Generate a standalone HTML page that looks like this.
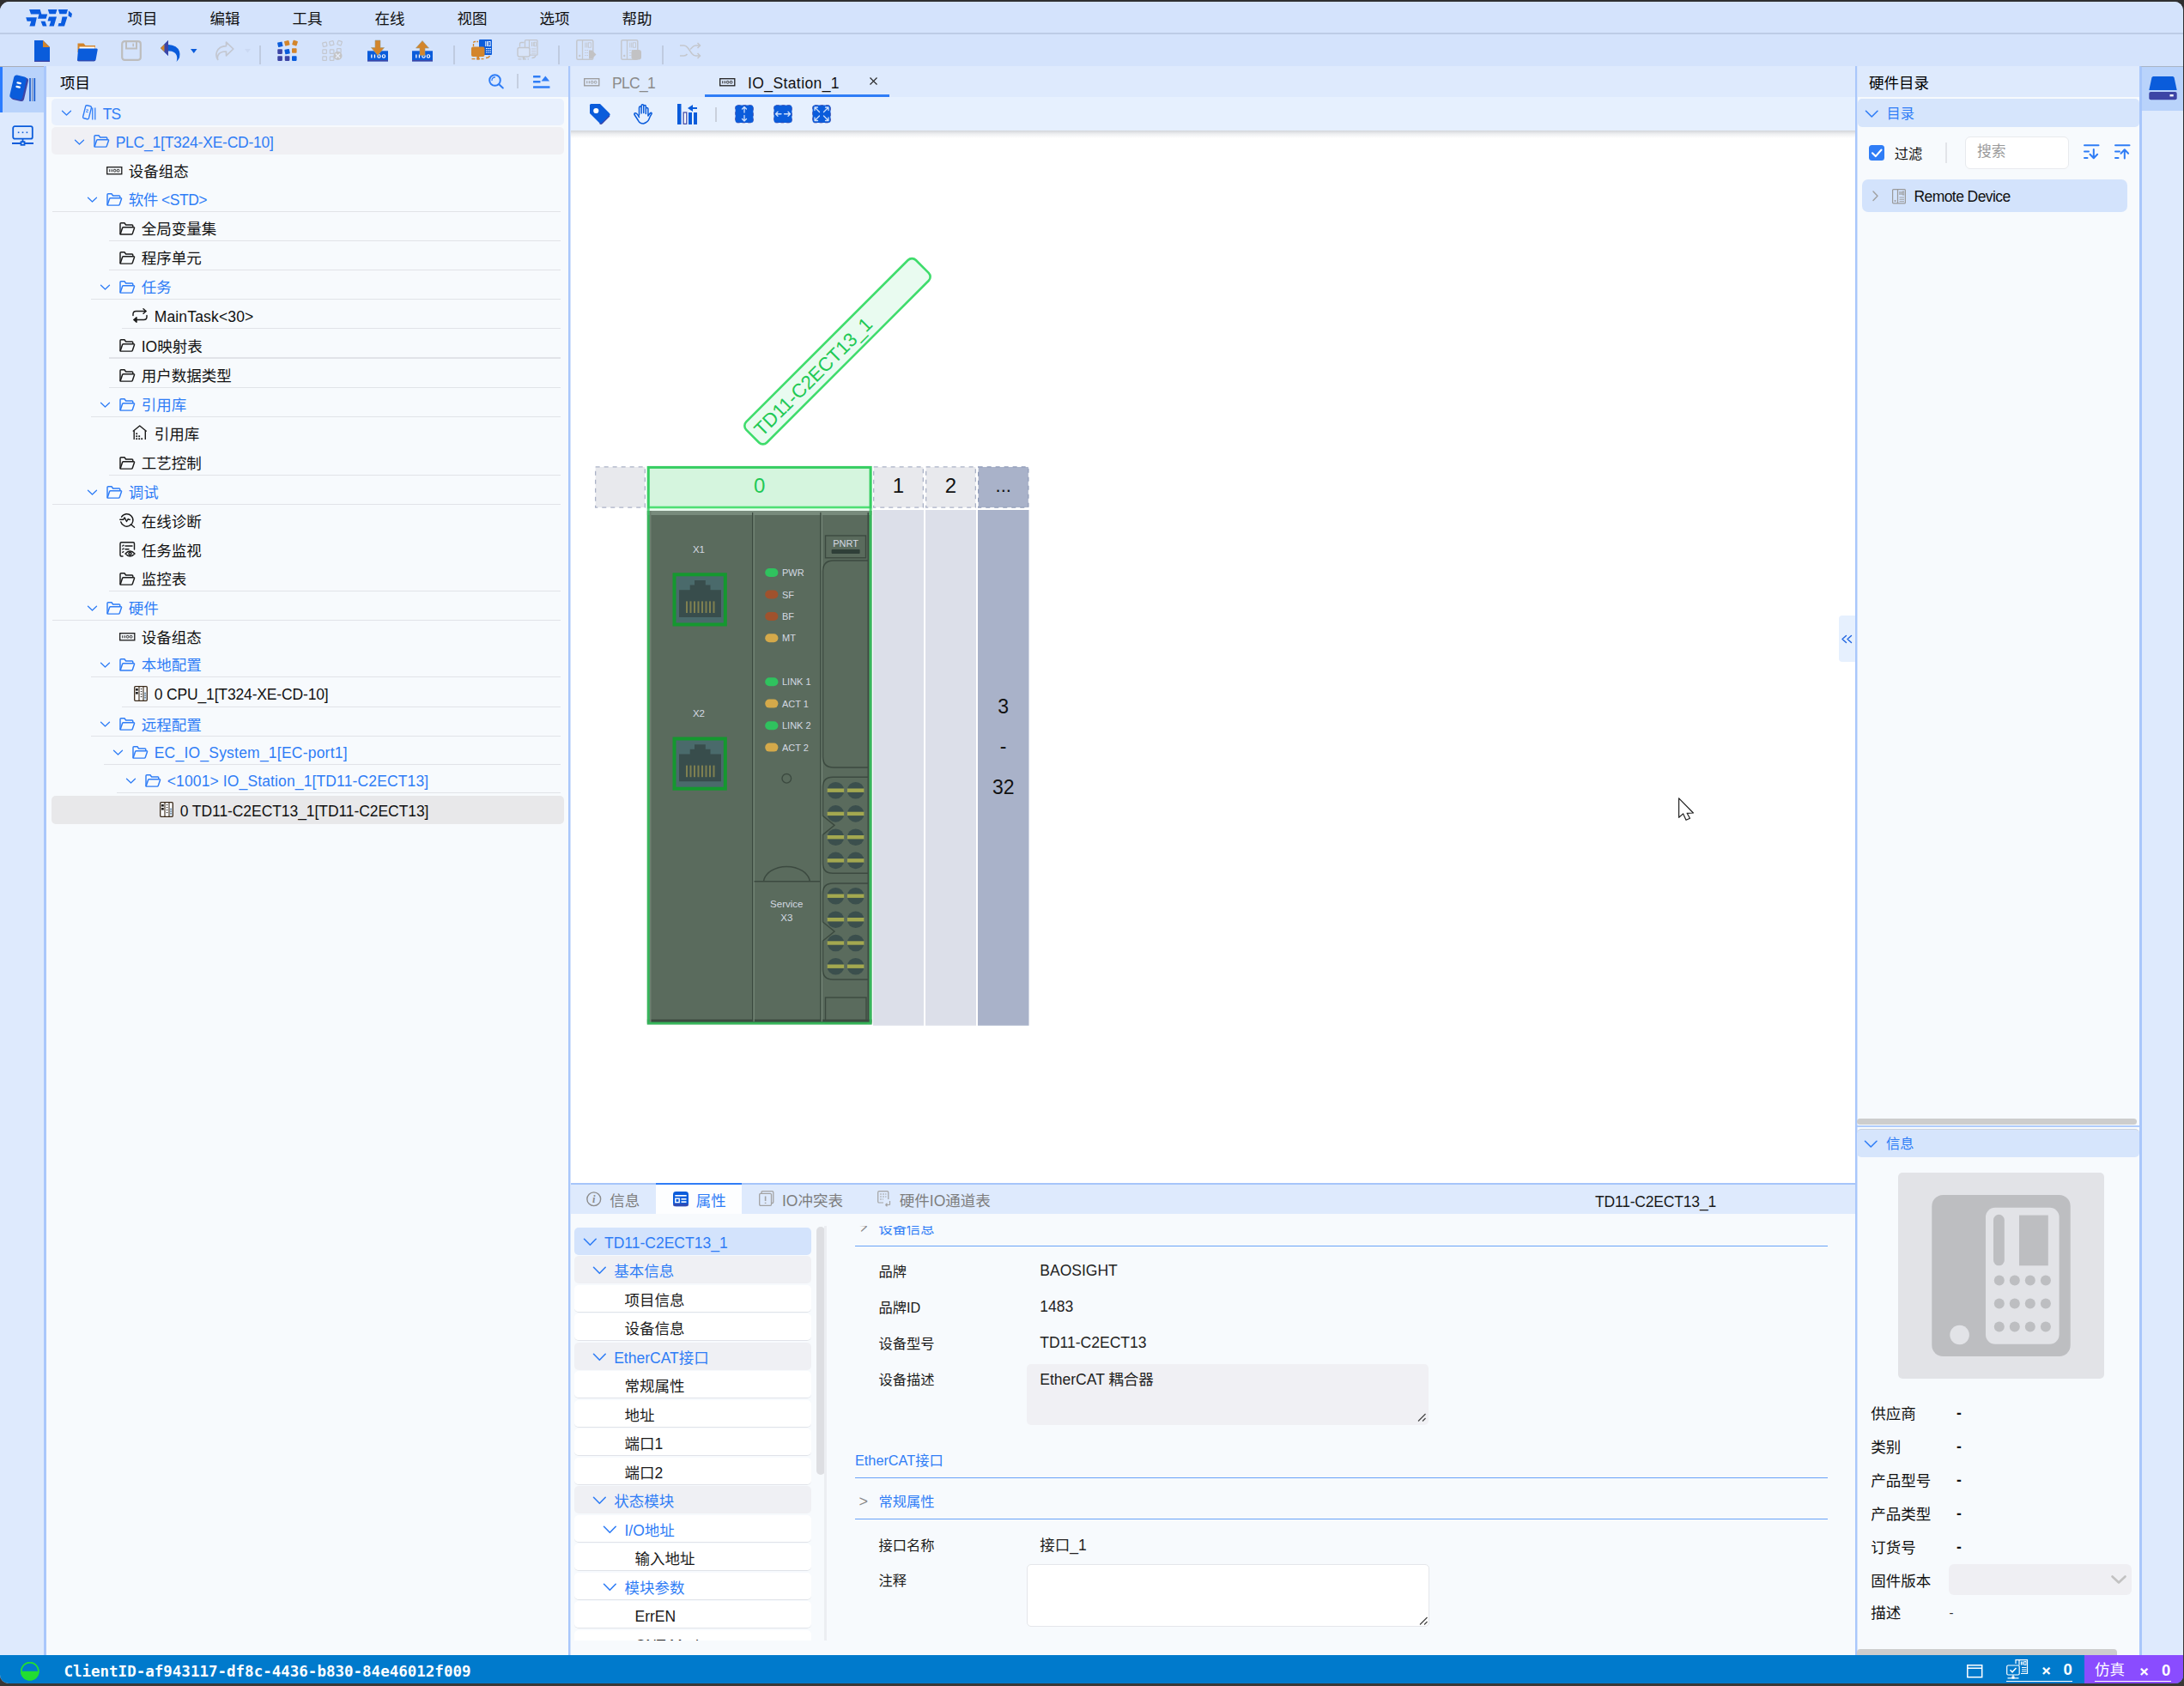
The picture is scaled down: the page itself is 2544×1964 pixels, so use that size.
<!DOCTYPE html>
<html lang="zh-CN"><head><meta charset="utf-8"><title>IO_Station_1</title>
<style>

*{box-sizing:border-box;margin:0;padding:0}
html,body{width:2544px;height:1964px;overflow:hidden;background:linear-gradient(#2f2f30,#2b2b2c 40%,#3a3836)}
body{font-family:"Liberation Sans","Noto Sans CJK SC",sans-serif;font-size:17.5px;color:#111;position:relative}
#win{position:absolute;left:0;top:2px;width:2543px;height:1959px;background:#d4e3fc;border-radius:11px 10px 9px 10px;overflow:hidden}
.abs{position:absolute}
svg{display:block;position:absolute;overflow:visible}
/* top */
#menubar{position:absolute;left:0;top:0;width:100%;height:37px;background:#d4e3fc}
#menubar .mi{position:absolute;top:2.2px;height:37px;line-height:37px;font-size:17.5px;color:#111;white-space:nowrap}
#menuline{position:absolute;left:0;top:36.2px;width:100%;height:1.6px;background:#bdcce6}
#toolbar{position:absolute;left:0;top:39px;width:100%;height:36px;background:#d4e3fc}
.tdiv{position:absolute;top:12px;width:2px;height:22px;background:#bfcbe0}
/* left strip */
#lstrip{position:absolute;left:0;top:75px;width:51px;height:1851px;background:#deeafd}
#lstrip .act{position:absolute;left:0;top:0;width:51px;height:54px;background:#b9d3fb;border-left:3px solid #2b7cff}
.vline{position:absolute;width:2.7px;background:#a9c7fb}
/* left panel */
#lpanel{position:absolute;left:54px;top:75px;width:608px;height:1851px;background:#f7fafd}
.phead{position:absolute;left:0;top:0;width:100%;height:36px;background:#deeafd;line-height:41px;font-size:17.5px;color:#000}
.row{position:absolute;height:31.25px;line-height:31px;white-space:nowrap;font-size:17.5px}
.row .bd{position:absolute;right:4px;bottom:0;height:1.25px;background:#e1e3e8}
.blue{color:#2f7df6}

.row .tx{position:absolute;top:1.5px;line-height:32.5px}

</style></head>
<body>
<div id="win">
<div id="menubar"><svg style="left:28px;top:7px" width="60" height="24" viewBox="28 9 60 24" >
<g fill="#0a5ce0">
<polygon points="34.100,11 46.700,11 48.400,16.500 55.200,16.500 53.600,21.700 44,21.700 45.500,16.600 36,16.600"/>
<polygon points="30.200,20.300 42.900,20.300 40.600,30.400 34.400,30.400 36.300,24.800 31.600,24.800"/>
<polygon points="47.600,24.800 52.500,24.800 54.500,30.400 49.800,30.400"/>
<polygon points="55.800,11 66.500,11 64.900,16.300 57.500,16.300"/>
<polygon points="57,19.500 66,19.500 62.800,30.400 57.300,30.400 59.300,24.500 55.500,24.500"/>
<polygon points="67.800,11 79,11 77.400,16.300 69.400,16.300"/>
<polygon points="80,12.500 84,16 83,20.500 79.500,18.500"/>
<polygon points="72.500,19.500 78.500,19.500 75,30.400 67.500,30.400 68.500,27 71,27"/>
</g></svg>
<div class="mi" style="left:148.5px">项目</div><div class="mi" style="left:244.5px">编辑</div><div class="mi" style="left:340.5px">工具</div><div class="mi" style="left:436.5px">在线</div><div class="mi" style="left:532.5px">视图</div><div class="mi" style="left:628.5px">选项</div><div class="mi" style="left:724.5px">帮助</div></div>
<div id="menuline"></div>
<div id="toolbar"><svg style="left:38.5px;top:6px" width="19" height="25" viewBox="0 0 19 25" >
<path d="M1 0h10l8 8v17H1z" fill="#0a5cdb"/><path d="M11 0l8 8h-8z" fill="#d3852b"/><rect x="1" y="23.6" width="18" height="1.4" fill="#3d45a5"/></svg>
<svg style="left:88.5px;top:7.5px" width="25" height="23" viewBox="0 0 25 23" >
<path d="M1.5 1.5h7l2 2.5h11.5v8h-20.5z" fill="#d3852b"/><rect x="3.5" y="5.5" width="18" height="5" fill="#fff"/>
<path d="M3.2 7.6h20.3q1.5 0 1.2 1.5l-2.1 11.5q-.4 1.6-2 1.6h-18.1q-1.8 0-1.5-1.7l1-11.4q.2-1.5 1.2-1.5z" fill="#0a5cdb"/>
<path d="M1 21.2q.3 1 1.5 1h18.1q1.2 0 1.8-1z" fill="#3d45a5"/></svg>
<svg style="left:141px;top:6px" width="24" height="24" viewBox="0 0 24 24" >
<rect x="1.2" y="1.2" width="21.6" height="21.6" rx="3" fill="none" stroke="#bdbdbd" stroke-width="2.2"/>
<path d="M6 1.5v8h12v-8" fill="none" stroke="#bdbdbd" stroke-width="2"/><rect x="13.4" y="3.6" width="1.6" height="3.6" fill="#bdbdbd"/></svg>
<svg style="left:187px;top:5.5px" width="23" height="26" viewBox="0 0 23 26" >
<path d="M9 0L0 9l9 9v-5.5q7-.5 9.5 4.5q1.5 3 0 8q5.500-5 3.500-12q-2.500-7.500-13-8z" fill="#0a5cdb"/>
<path d="M9 0v18L4.5 13.500v-9z" fill="#3d45a5"/>
<path d="M4.500 4.500L0 9l4.500 4.500z" fill="#d3852b"/></svg>
<svg style="left:221.5px;top:15.5px" width="7.5" height="5" viewBox="0 0 7.500 5" ><path d="M0 0h7.500L3.750 5z" fill="#0a5cdb"/></svg>
<svg style="left:251px;top:6.5px" width="22" height="23" viewBox="0 0 22 23" >
<path d="M12.500 1.200l8.300 7.800-8.300 7.800v-4.800q-6.500-.2-9 3.500q-1.800 2.800-.8 6q-3-4.500-1-9.500q2.600-6 10.800-6.300z" fill="none" stroke="#c3c7d1" stroke-width="1.700" stroke-linejoin="round"/></svg>
<svg style="left:285px;top:15.5px" width="7" height="4.5" viewBox="0 0 7 4.500" ><path d="M0 0h7L3.500 4.500z" fill="#cbd9f3"/></svg>
<div class="tdiv" style="left:301.500px"></div><svg style="left:323px;top:5.5px" width="24" height="24.5" viewBox="0 0 24 24.500" ><rect x="0.5" y="2" width="5.6" height="5.6" rx=".8" fill="#0a5cdb" transform="rotate(-12 3.3 4.8)"/><rect x="8.5" y="0.5" width="5.6" height="5.6" rx=".8" fill="#d3852b" transform="rotate(-14 11.3 3.3)"/><rect x="17.8" y="0.3" width="5.6" height="5.6" rx=".8" fill="#d3852b" transform="rotate(18 20.6 3.1)"/><rect x="0.3" y="10.3" width="5.6" height="5.6" rx=".8" fill="#3d45a5" transform="rotate(0 3.1 13.1)"/><rect x="8.8" y="10.3" width="5.6" height="5.6" rx=".8" fill="#0a5cdb" transform="rotate(-12 11.6 13.1)"/><rect x="17" y="9.2" width="5.6" height="5.6" rx=".8" fill="#d3852b" transform="rotate(0 19.8 12)"/><rect x="0.3" y="18.3" width="5.6" height="5.6" rx=".8" fill="#3d45a5" transform="rotate(0 3.1 21.1)"/><rect x="8.8" y="18.3" width="5.6" height="5.6" rx=".8" fill="#3d45a5" transform="rotate(0 11.6 21.1)"/><rect x="17" y="18.3" width="5.6" height="5.6" rx=".8" fill="#0a5cdb" transform="rotate(0 19.8 21.1)"/></svg>
<svg style="left:375px;top:5.5px" width="24" height="24.5" viewBox="0 0 24 24.500" ><rect x="1" y="2.5" width="4.6" height="4.6" rx=".6" fill="none" stroke="#c4c8d0" stroke-width="1.200" transform="rotate(-12 3.3 4.8)"/><rect x="9" y="1" width="4.6" height="4.6" rx=".6" fill="none" stroke="#c4c8d0" stroke-width="1.200" transform="rotate(-14 11.3 3.3)"/><rect x="18.3" y="0.8" width="4.6" height="4.6" rx=".6" fill="none" stroke="#c4c8d0" stroke-width="1.200" transform="rotate(18 20.6 3.1)"/><rect x="0.8" y="10.8" width="4.6" height="4.6" rx=".6" fill="none" stroke="#c4c8d0" stroke-width="1.200" transform="rotate(0 3.1 13.1)"/><rect x="9.3" y="10.8" width="4.6" height="4.6" rx=".6" fill="none" stroke="#c4c8d0" stroke-width="1.200" transform="rotate(0 11.6 13.1)"/><rect x="17.5" y="9.7" width="4.6" height="4.6" rx=".6" fill="none" stroke="#c4c8d0" stroke-width="1.200" transform="rotate(0 19.8 12)"/><rect x="0.8" y="18.8" width="4.6" height="4.6" rx=".6" fill="none" stroke="#c4c8d0" stroke-width="1.200" transform="rotate(0 3.1 21.1)"/><rect x="9.3" y="18.8" width="4.6" height="4.6" rx=".6" fill="none" stroke="#c4c8d0" stroke-width="1.200" transform="rotate(0 11.6 21.1)"/><circle cx="18.500" cy="18" r="5" fill="#c4c4c6"/><path d="M16 15.500l5 5m0-5l-5 5" stroke="#e4ebf8" stroke-width="1.600"/></svg>
<svg style="left:428px;top:6px" width="24" height="24.5" viewBox="0 0 24 24.500" ><rect x="0" y="12.300" width="24" height="12" fill="#0a5cdb"/><rect x="0" y="23" width="24" height="1.500" fill="#3d45a5"/><rect x="4.200" y="16.500" width="1.300" height="4" fill="#fff"/><rect x="7.800" y="16.500" width="1.300" height="4" fill="#fff"/><circle cx="13.500" cy="18.500" r="1.700" fill="none" stroke="#fff" stroke-width="1.100"/><circle cx="19" cy="18.500" r="1.700" fill="none" stroke="#fff" stroke-width="1.100"/><path d="M9 0h6v8.500h4.500L12 17.500 4.500 8.500H9z" fill="#d3852b" stroke="#9a9a80" stroke-width=".6"/></svg>
<svg style="left:480px;top:6px" width="24" height="24.5" viewBox="0 0 24 24.500" ><rect x="0" y="12.300" width="24" height="12" fill="#0a5cdb"/><rect x="0" y="23" width="24" height="1.500" fill="#3d45a5"/><rect x="4.200" y="16.500" width="1.300" height="4" fill="#fff"/><rect x="7.800" y="16.500" width="1.300" height="4" fill="#fff"/><circle cx="13.500" cy="18.500" r="1.700" fill="none" stroke="#fff" stroke-width="1.100"/><circle cx="19" cy="18.500" r="1.700" fill="none" stroke="#fff" stroke-width="1.100"/><path d="M9 17.500h6V9h4.500L12 .5 4.500 9H9z" fill="#d3852b" stroke="#9a9a80" stroke-width=".6"/></svg>
<div class="tdiv" style="left:527.500px"></div><svg style="left:548px;top:5px" width="26" height="25" viewBox="0 0 26 25" >
<rect x="10" y="0" width="15" height="18" rx="1" fill="#0a5cdb"/>
<g fill="#fff"><rect x="17.300" y="2" width=".9" height="6"/><rect x="19" y="2" width=".9" height="6"/><rect x="21" y="2.400" width="2.200" height="5.200" fill="none" stroke="#fff" stroke-width=".8"/>
<rect x="18" y="10" width="1.500" height="1"/><rect x="20.200" y="10" width="1.500" height="1"/><rect x="22.400" y="10" width="1.500" height="1"/>
<rect x="18" y="12.300" width="1.500" height="1"/><rect x="20.200" y="12.300" width="1.500" height="1"/><rect x="22.400" y="12.300" width="1.500" height="1"/>
<rect x="18" y="14.600" width="1.500" height="1"/><rect x="20.200" y="14.600" width="1.500" height="1"/><rect x="22.400" y="14.600" width="1.500" height="1"/></g>
<path d="M3.500 8V4q0-1.500 1.500-1.500h4" fill="none" stroke="#d3852b" stroke-width="1.300" stroke-dasharray="3 1.200"/>
<rect x="1" y="8.500" width="15.500" height="11.500" rx="2" fill="#d3852b"/>
<rect x="7.300" y="20" width="3" height="3.600" fill="#d3852b"/><path d="M1.500 22.600h14" stroke="#d3852b" stroke-width="1.200" stroke-dasharray="4 1.500"/>
<path d="M18 21.500q3.500 0 4.500-2.500" fill="none" stroke="#d3852b" stroke-width="1.300"/></svg>
<svg style="left:602px;top:5px" width="25" height="25" viewBox="0 0 25 25" >
<rect x="9.500" y=".7" width="14.500" height="17.500" rx="1" fill="none" stroke="#c4c7cd" stroke-width="1.300"/>
<path d="M14.500 1v17" stroke="#c4c7cd" stroke-width="1.200"/>
<g fill="#c4c7cd"><rect x="17" y="3" width="1" height="5"/><rect x="18.800" y="3" width="1" height="5"/><rect x="20.500" y="3.200" width="2" height="4.600" fill="none" stroke="#c4c7cd" stroke-width=".8"/>
<rect x="17" y="10.500" width="5.500" height=".9"/><rect x="17" y="13" width="5.500" height=".9"/><rect x="17" y="15.500" width="5.500" height=".9"/></g>
<path d="M3.500 8.500V5q0-1.500 1.500-1.500h3.500" fill="none" stroke="#c4c7cd" stroke-width="1.300"/>
<rect x="1" y="9.500" width="14" height="10.500" rx="2" fill="#d8e4f8" stroke="#c4c7cd" stroke-width="1.400"/>
<rect x="6.800" y="20" width="2.600" height="3.400" fill="#c4c7cd"/><path d="M1.500 22.800h12.500" stroke="#c4c7cd" stroke-width="1.200" stroke-dasharray="4 1.500"/>
<path d="M17.500 21.500q3.500 0 4.500-2.500" fill="none" stroke="#c4c7cd" stroke-width="1.300"/></svg>
<div class="tdiv" style="left:649.500px"></div><svg style="left:671px;top:5px" width="25" height="24.5" viewBox="0 0 25 24.500" ><rect x=".8" y=".8" width="19" height="22.500" rx="1.500" fill="none" stroke="#c4c7cd" stroke-width="1.500"/>
<path d="M7.500 1v22" stroke="#c4c7cd" stroke-width="1.300"/><circle cx="4.200" cy="19" r="1.200" fill="#c4c7cd"/>
<g fill="#c4c7cd"><rect x="10.300" y="3.500" width="1" height="6"/><rect x="12.300" y="3.500" width="1" height="6"/><rect x="14.300" y="3.800" width="3.200" height="5.400" fill="none" stroke="#c4c7cd" stroke-width=".9"/>
<rect x="10.300" y="12" width="1.300" height="1"/><rect x="12.600" y="12" width="1.300" height="1"/><rect x="10.300" y="15" width="1.300" height="1"/><rect x="12.600" y="15" width="1.300" height="1"/><rect x="10.300" y="18" width="1.300" height="1"/><rect x="12.600" y="18" width="1.300" height="1"/></g><path d="M15 12.500h3.500l5 5-5 5H15z" fill="#c2c2c4"/></svg>
<svg style="left:723px;top:5px" width="25" height="24.5" viewBox="0 0 25 24.500" ><rect x=".8" y=".8" width="19" height="22.500" rx="1.500" fill="none" stroke="#c4c7cd" stroke-width="1.500"/>
<path d="M7.500 1v22" stroke="#c4c7cd" stroke-width="1.300"/><circle cx="4.200" cy="19" r="1.200" fill="#c4c7cd"/>
<g fill="#c4c7cd"><rect x="10.300" y="3.500" width="1" height="6"/><rect x="12.300" y="3.500" width="1" height="6"/><rect x="14.300" y="3.800" width="3.200" height="5.400" fill="none" stroke="#c4c7cd" stroke-width=".9"/>
<rect x="10.300" y="12" width="1.300" height="1"/><rect x="12.600" y="12" width="1.300" height="1"/><rect x="10.300" y="15" width="1.300" height="1"/><rect x="12.600" y="15" width="1.300" height="1"/><rect x="10.300" y="18" width="1.300" height="1"/><rect x="12.600" y="18" width="1.300" height="1"/></g><rect x="12.500" y="12" width="11.500" height="11.500" rx="3" fill="#c2c2c4"/></svg>
<div class="tdiv" style="left:770.800px"></div><svg style="left:792px;top:7.5px" width="25" height="20" viewBox="0 0 25 20" ><g fill="none" stroke="#c4c7cd" stroke-width="1.500"><path d="M0 4h4.500q2.500 0 4.500 2.500l5 7q2 2.500 4.500 2.500h5"/><path d="M0 16h4.500q2.500 0 4 -2M12 8.500l2-2q2-2.500 4.500-2.500h5"/><path d="M20.500 1l3 3-3 3M20.500 13l3 3-3 3"/></g></svg>
</div>
<div id="lstrip"><div class="act"></div><div class="abs" style="left:0;top:0;width:51px;height:1.200px;background:#a9aeb8"></div><svg style="left:10px;top:9px" width="33" height="34" viewBox="0 0 33 34" ><rect x="5.300" y="3" width="15.500" height="28" rx="3.200" fill="#3d45a5" transform="rotate(13 11.750 16.500)"/><rect x="3.500" y="2.300" width="15" height="27.500" rx="3.200" fill="#0a5cdb" transform="rotate(13 11.750 16.500)"/><g stroke="#fff" stroke-width="2.300" stroke-linecap="round"><path d="M10.500 10.300l3.300.8M9.500 14.800l3.300.8"/></g><path d="M25 5v27M30.300 5v27" stroke="#1a5fd0" stroke-width="1.700"/><path d="M27.700 5v27" stroke="#7f96c4" stroke-width="1.500"/></svg>
<svg style="left:13.5px;top:69px" width="25" height="25" viewBox="0 0 25 25" ><g fill="none" stroke="#0a5cdb" stroke-width="1.800"><rect x="1.200" y="1.200" width="22.600" height="14.500" rx="2"/><path d="M12.500 15.700v5M0 21h25"/><rect x="10.500" y="19.200" width="4" height="3.600" fill="#deeafd"/></g><g fill="#0a5cdb"><rect x="6.800" y="7.500" width="1.600" height="1.600"/><rect x="11.700" y="7.500" width="1.600" height="1.600"/><rect x="16.600" y="7.500" width="1.600" height="1.600"/></g></svg>
</div><div class="vline" style="left:51px;top:75px;height:1851px"></div>
<div id="lpanel"><div class="phead"><span style="position:absolute;left:16px">项目</span><svg style="left:515px;top:8.5px" width="18" height="18" viewBox="0 0 18 18" ><g fill="none" stroke="#2f7df6" stroke-width="2" stroke-linecap="round"><circle cx="7.500" cy="7.500" r="6.300"/><path d="M12.300 12.300l4.500 4.200"/><path d="M4 7.500a3.500 3.500 0 0 1 3.500-3.500" stroke-width="1.300"/></g></svg>
<div style="position:absolute;left:548px;top:9px;width:2px;height:17px;background:#c5cfe0"></div><svg style="left:566.5px;top:11px" width="19.5" height="15" viewBox="0 0 19.500 15" ><g fill="#2f7df6"><rect x="0" y="0" width="8.500" height="2.600" rx=".5"/><rect x="0" y="6" width="8.500" height="2.600" rx=".5"/><rect x="0" y="12.200" width="19.500" height="2.600" rx=".5"/><path d="M9.500 6.500l4.800-6 4.800 6z"/></g></svg>
</div><div class="row" style="left:6px;top:38px;width:597px;background:#e8f0fd;border-radius:5px;"><svg style="left:12px;top:14.3px" width="11" height="5.5" viewBox="0 0 11 5.5" ><path d="M.5 .3L5.5 5L10.5 .3" fill="none" stroke="#2f7df6" stroke-width="1.3" stroke-linecap="round" stroke-linejoin="round"/></svg>
<svg style="left:34.5px;top:7px" width="17" height="18" viewBox="0 0 17 18" ><g fill="none" stroke="#2f7df6" stroke-width="1.400"><rect x="3" y="1" width="7" height="15.500" rx="1.500" transform="rotate(14 6.500 9)"/><path d="M5.500 5.800l2.500.6M5 8l2.500.6" stroke-width="1.100"/><path d="M12.800 3.500v14M15.800 3.500v14" stroke-width="1.300"/></g></svg>
<span class="tx blue" id="lt0" style="left:59.7px;letter-spacing:-0.8px">TS</span></div>
<div class="row" style="left:6px;top:71.3px;width:597px;background:#f0f0f4;border-radius:5px;"><svg style="left:27px;top:14.3px" width="11" height="5.5" viewBox="0 0 11 5.5" ><path d="M.5 .3L5.5 5L10.5 .3" fill="none" stroke="#2f7df6" stroke-width="1.3" stroke-linecap="round" stroke-linejoin="round"/></svg>
<svg style="left:49px;top:8.9px" width="18.5" height="15" viewBox="0 0 18.5 15" ><g fill="none" stroke="#2f7df6" stroke-width="1.45" stroke-linejoin="round"><path d="M1 13.500V1.800q0-1 1-1h4l1.600 2.200h7.200q1 0 1 1v1.500"/><path d="M1.100 13.900l2.500-7.300q.3-.9 1.200-.9h11.900q1.100 0 .8 1l-2.200 6.500q-.3.900-1.200.9H2q-1 0-1-.9z"/></g></svg>
<span class="tx blue" id="lt1" style="left:74.7px;letter-spacing:-0.235px">PLC_1[T324-XE-CD-10]</span></div>
<div class="row" style="left:6px;top:105.4px;width:597px;"><svg style="left:64px;top:11.5px" width="18.5" height="9.5" viewBox="0 0 18.500 9.500" ><rect x=".7" y=".7" width="17.100" height="8.100" fill="none" stroke="#1b1b1b" stroke-width="1.300"/><g fill="#1b1b1b"><rect x="3.300" y="3.200" width="1" height="3.100"/><rect x="5.800" y="3.200" width="1" height="3.100"/></g><g fill="none" stroke="#1b1b1b" stroke-width=".9"><rect x="8.300" y="3.400" width="2.600" height="2.700" rx=".8"/><rect x="12.300" y="3.400" width="2.600" height="2.700" rx=".8"/></g></svg>
<span class="tx" id="lt2" style="left:89.7px">设备组态</span></div>
<div class="row" style="left:6px;top:138.7px;width:597px;"><div class="bd" style="left:1px"></div><svg style="left:42px;top:14.3px" width="11" height="5.5" viewBox="0 0 11 5.5" ><path d="M.5 .3L5.5 5L10.5 .3" fill="none" stroke="#2f7df6" stroke-width="1.3" stroke-linecap="round" stroke-linejoin="round"/></svg>
<svg style="left:64px;top:8.9px" width="18.5" height="15" viewBox="0 0 18.5 15" ><g fill="none" stroke="#2f7df6" stroke-width="1.45" stroke-linejoin="round"><path d="M1 13.500V1.800q0-1 1-1h4l1.600 2.200h7.200q1 0 1 1v1.500"/><path d="M1.100 13.900l2.500-7.300q.3-.9 1.200-.9h11.900q1.100 0 .8 1l-2.200 6.500q-.3.900-1.200.9H2q-1 0-1-.9z"/></g></svg>
<span class="tx blue" id="lt3" style="left:89.7px;letter-spacing:-0.5px">软件 &lt;STD&gt;</span></div>
<div class="row" style="left:6px;top:172.7px;width:597px;"><div class="bd" style="left:67px"></div><svg style="left:79px;top:8.9px" width="18.5" height="15" viewBox="0 0 18.5 15" ><g fill="none" stroke="#1b1b1b" stroke-width="1.45" stroke-linejoin="round"><path d="M1 13.500V1.800q0-1 1-1h4l1.600 2.200h7.200q1 0 1 1v1.500"/><path d="M1.100 13.900l2.500-7.300q.3-.9 1.200-.9h11.900q1.100 0 .8 1l-2.200 6.500q-.3.900-1.200.9H2q-1 0-1-.9z"/></g></svg>
<span class="tx" id="lt4" style="left:104.7px">全局变量集</span></div>
<div class="row" style="left:6px;top:206.8px;width:597px;"><div class="bd" style="left:67px"></div><svg style="left:79px;top:8.9px" width="18.5" height="15" viewBox="0 0 18.5 15" ><g fill="none" stroke="#1b1b1b" stroke-width="1.45" stroke-linejoin="round"><path d="M1 13.500V1.800q0-1 1-1h4l1.600 2.200h7.200q1 0 1 1v1.500"/><path d="M1.100 13.900l2.500-7.300q.3-.9 1.200-.9h11.900q1.100 0 .8 1l-2.200 6.500q-.3.900-1.200.9H2q-1 0-1-.9z"/></g></svg>
<span class="tx" id="lt5" style="left:104.7px">程序单元</span></div>
<div class="row" style="left:6px;top:240.9px;width:597px;"><div class="bd" style="left:46px"></div><svg style="left:57px;top:14.3px" width="11" height="5.5" viewBox="0 0 11 5.5" ><path d="M.5 .3L5.5 5L10.5 .3" fill="none" stroke="#2f7df6" stroke-width="1.3" stroke-linecap="round" stroke-linejoin="round"/></svg>
<svg style="left:79px;top:8.9px" width="18.5" height="15" viewBox="0 0 18.5 15" ><g fill="none" stroke="#2f7df6" stroke-width="1.45" stroke-linejoin="round"><path d="M1 13.500V1.800q0-1 1-1h4l1.600 2.200h7.200q1 0 1 1v1.500"/><path d="M1.100 13.900l2.500-7.300q.3-.9 1.200-.9h11.900q1.100 0 .8 1l-2.200 6.500q-.3.900-1.200.9H2q-1 0-1-.9z"/></g></svg>
<span class="tx blue" id="lt6" style="left:104.7px">任务</span></div>
<div class="row" style="left:6px;top:274.9px;width:597px;"><div class="bd" style="left:82px"></div><svg style="left:94px;top:7.5px" width="18" height="17" viewBox="0 0 18 17" ><g fill="none" stroke="#1b1b1b" stroke-width="1.450" stroke-linecap="round" stroke-linejoin="round"><path d="M1 8.500V7q0-3.500 3.500-3.500H16"/><path d="M13 .8l3 2.700-3 2.700"/><path d="M17 8.500V10q0 3.500-3.500 3.500H2"/><path d="M5 10.800l-3 2.700 3 2.700z" fill="#1b1b1b"/></g></svg>
<span class="tx" id="lt7" style="left:119.7px;letter-spacing:0.16px">MainTask&lt;30&gt;</span></div>
<div class="row" style="left:6px;top:309.3px;width:597px;"><div class="bd" style="left:67px"></div><svg style="left:79px;top:8.9px" width="18.5" height="15" viewBox="0 0 18.5 15" ><g fill="none" stroke="#1b1b1b" stroke-width="1.45" stroke-linejoin="round"><path d="M1 13.500V1.800q0-1 1-1h4l1.600 2.200h7.200q1 0 1 1v1.500"/><path d="M1.100 13.900l2.500-7.300q.3-.9 1.200-.9h11.900q1.100 0 .8 1l-2.200 6.500q-.3.900-1.200.9H2q-1 0-1-.9z"/></g></svg>
<span class="tx" id="lt8" style="left:104.7px">IO映射表</span></div>
<div class="row" style="left:6px;top:343.7px;width:597px;"><div class="bd" style="left:67px"></div><svg style="left:79px;top:8.9px" width="18.5" height="15" viewBox="0 0 18.5 15" ><g fill="none" stroke="#1b1b1b" stroke-width="1.45" stroke-linejoin="round"><path d="M1 13.500V1.800q0-1 1-1h4l1.600 2.200h7.200q1 0 1 1v1.500"/><path d="M1.100 13.900l2.500-7.300q.3-.9 1.200-.9h11.900q1.100 0 .8 1l-2.200 6.500q-.3.900-1.200.9H2q-1 0-1-.9z"/></g></svg>
<span class="tx" id="lt9" style="left:104.7px">用户数据类型</span></div>
<div class="row" style="left:6px;top:377.8px;width:597px;"><div class="bd" style="left:46px"></div><svg style="left:57px;top:14.3px" width="11" height="5.5" viewBox="0 0 11 5.5" ><path d="M.5 .3L5.5 5L10.5 .3" fill="none" stroke="#2f7df6" stroke-width="1.3" stroke-linecap="round" stroke-linejoin="round"/></svg>
<svg style="left:79px;top:8.9px" width="18.5" height="15" viewBox="0 0 18.5 15" ><g fill="none" stroke="#2f7df6" stroke-width="1.45" stroke-linejoin="round"><path d="M1 13.500V1.800q0-1 1-1h4l1.600 2.200h7.200q1 0 1 1v1.500"/><path d="M1.100 13.900l2.500-7.300q.3-.9 1.200-.9h11.900q1.100 0 .8 1l-2.200 6.500q-.3.900-1.200.9H2q-1 0-1-.9z"/></g></svg>
<span class="tx blue" id="lt10" style="left:104.7px">引用库</span></div>
<div class="row" style="left:6px;top:411.7px;width:597px;"><svg style="left:94px;top:6.5px" width="17.5" height="17.5" viewBox="0 0 17.500 17.500" ><g fill="none" stroke="#1b1b1b" stroke-width="1.400" stroke-linejoin="round"><path d="M.8 7.500L8.750 1l7.950 6.500"/><path d="M2.200 6.500V17M15.300 6.500V17"/></g><g fill="#1b1b1b"><rect x="4.300" y="9.300" width="1.800" height="1.800"/><rect x="4.300" y="12.300" width="1.800" height="1.800"/><rect x="7.300" y="12.300" width="1.800" height="1.800"/><rect x="4.300" y="15.300" width="1.800" height="1.800"/><rect x="7.300" y="15.300" width="1.800" height="1.800"/><rect x="10.300" y="15.300" width="1.800" height="1.800"/></g></svg>
<span class="tx" id="lt11" style="left:119.7px">引用库</span></div>
<div class="row" style="left:6px;top:445.7px;width:597px;"><div class="bd" style="left:67px"></div><svg style="left:79px;top:8.9px" width="18.5" height="15" viewBox="0 0 18.5 15" ><g fill="none" stroke="#1b1b1b" stroke-width="1.45" stroke-linejoin="round"><path d="M1 13.500V1.800q0-1 1-1h4l1.600 2.200h7.200q1 0 1 1v1.500"/><path d="M1.100 13.900l2.500-7.300q.3-.9 1.200-.9h11.900q1.100 0 .8 1l-2.200 6.500q-.3.900-1.200.9H2q-1 0-1-.9z"/></g></svg>
<span class="tx" id="lt12" style="left:104.7px">工艺控制</span></div>
<div class="row" style="left:6px;top:479.7px;width:597px;"><div class="bd" style="left:1px"></div><svg style="left:42px;top:14.3px" width="11" height="5.5" viewBox="0 0 11 5.5" ><path d="M.5 .3L5.5 5L10.5 .3" fill="none" stroke="#2f7df6" stroke-width="1.3" stroke-linecap="round" stroke-linejoin="round"/></svg>
<svg style="left:64px;top:8.9px" width="18.5" height="15" viewBox="0 0 18.5 15" ><g fill="none" stroke="#2f7df6" stroke-width="1.45" stroke-linejoin="round"><path d="M1 13.500V1.800q0-1 1-1h4l1.600 2.200h7.200q1 0 1 1v1.500"/><path d="M1.100 13.900l2.500-7.300q.3-.9 1.200-.9h11.900q1.100 0 .8 1l-2.200 6.500q-.3.900-1.200.9H2q-1 0-1-.9z"/></g></svg>
<span class="tx blue" id="lt13" style="left:89.7px">调试</span></div>
<div class="row" style="left:6px;top:513.3px;width:597px;"><svg style="left:79px;top:7px" width="18.5" height="18" viewBox="0 0 18.500 18" ><g fill="none" stroke="#1b1b1b" stroke-width="1.450" stroke-linecap="round" stroke-linejoin="round"><path d="M2.600 5.200A7.200 7.200 0 1 1 1.800 11"/><path d="M.8 8.300h3.800l1.500-2.400 2.400 4.600 1.700-3 .9 .8h1.200"/><path d="M13.300 13.800l4.200 3.500"/></g></svg>
<span class="tx" id="lt14" style="left:104.7px">在线诊断</span></div>
<div class="row" style="left:6px;top:547.1px;width:597px;"><svg style="left:79px;top:7px" width="18.5" height="18" viewBox="0 0 18.500 18" ><g fill="none" stroke="#1b1b1b" stroke-width="1.450" stroke-linecap="round" stroke-linejoin="round"><path d="M4 17H2.500q-1.500 0-1.500-1.500V2.300Q1 .8 2.500 .8h13.500q1.500 0 1.500 1.500V9"/><path d="M7 5h8M3.800 5l1.200 -.8M7 8.800h4M3.800 8.800l1.200-.8M3.800 12.300l1-.6"/><path d="M7 14q2.700-3 5.500-3t5.500 3q-2.800 3-5.500 3T7 14z"/><circle cx="12.500" cy="14" r="1.500"/></g></svg>
<span class="tx" id="lt15" style="left:104.7px">任务监视</span></div>
<div class="row" style="left:6px;top:580.9px;width:597px;"><div class="bd" style="left:67px"></div><svg style="left:79px;top:8.9px" width="18.5" height="15" viewBox="0 0 18.5 15" ><g fill="none" stroke="#1b1b1b" stroke-width="1.45" stroke-linejoin="round"><path d="M1 13.500V1.800q0-1 1-1h4l1.600 2.200h7.200q1 0 1 1v1.500"/><path d="M1.100 13.900l2.500-7.300q.3-.9 1.200-.9h11.900q1.100 0 .8 1l-2.200 6.500q-.3.900-1.200.9H2q-1 0-1-.9z"/></g></svg>
<span class="tx" id="lt16" style="left:104.7px">监控表</span></div>
<div class="row" style="left:6px;top:614.9px;width:597px;"><div class="bd" style="left:1px"></div><svg style="left:42px;top:14.3px" width="11" height="5.5" viewBox="0 0 11 5.5" ><path d="M.5 .3L5.5 5L10.5 .3" fill="none" stroke="#2f7df6" stroke-width="1.3" stroke-linecap="round" stroke-linejoin="round"/></svg>
<svg style="left:64px;top:8.9px" width="18.5" height="15" viewBox="0 0 18.5 15" ><g fill="none" stroke="#2f7df6" stroke-width="1.45" stroke-linejoin="round"><path d="M1 13.500V1.800q0-1 1-1h4l1.600 2.200h7.200q1 0 1 1v1.500"/><path d="M1.100 13.900l2.500-7.300q.3-.9 1.200-.9h11.900q1.100 0 .8 1l-2.200 6.500q-.3.900-1.200.9H2q-1 0-1-.9z"/></g></svg>
<span class="tx blue" id="lt17" style="left:89.7px">硬件</span></div>
<div class="row" style="left:6px;top:648.1px;width:597px;"><svg style="left:79px;top:11.5px" width="18.5" height="9.5" viewBox="0 0 18.500 9.500" ><rect x=".7" y=".7" width="17.100" height="8.100" fill="none" stroke="#1b1b1b" stroke-width="1.300"/><g fill="#1b1b1b"><rect x="3.300" y="3.200" width="1" height="3.100"/><rect x="5.800" y="3.200" width="1" height="3.100"/></g><g fill="none" stroke="#1b1b1b" stroke-width=".9"><rect x="8.300" y="3.400" width="2.600" height="2.700" rx=".8"/><rect x="12.300" y="3.400" width="2.600" height="2.700" rx=".8"/></g></svg>
<span class="tx" id="lt18" style="left:104.7px">设备组态</span></div>
<div class="row" style="left:6px;top:680.7px;width:597px;"><div class="bd" style="left:46px"></div><svg style="left:57px;top:14.3px" width="11" height="5.5" viewBox="0 0 11 5.5" ><path d="M.5 .3L5.5 5L10.5 .3" fill="none" stroke="#2f7df6" stroke-width="1.3" stroke-linecap="round" stroke-linejoin="round"/></svg>
<svg style="left:79px;top:8.9px" width="18.5" height="15" viewBox="0 0 18.5 15" ><g fill="none" stroke="#2f7df6" stroke-width="1.45" stroke-linejoin="round"><path d="M1 13.500V1.800q0-1 1-1h4l1.600 2.200h7.200q1 0 1 1v1.500"/><path d="M1.100 13.900l2.500-7.300q.3-.9 1.200-.9h11.900q1.100 0 .8 1l-2.200 6.500q-.3.900-1.200.9H2q-1 0-1-.9z"/></g></svg>
<span class="tx blue" id="lt19" style="left:104.7px">本地配置</span></div>
<div class="row" style="left:6px;top:716px;width:597px;"><div class="bd" style="left:82px"></div><svg style="left:95.5px;top:5.8px" width="16" height="18" viewBox="0 0 16 18" ><rect x=".7" y=".7" width="14.600" height="16.600" rx="1" fill="#fff" stroke="#3a2a1a" stroke-width="1.300"/><path d="M6 .7v16.600M11 .7v16.600" stroke="#3a2a1a" stroke-width="1.100"/><rect x="2" y="3" width="2.800" height="2.600" fill="#222"/><rect x="2" y="7" width="2.800" height="2.600" fill="#222"/>
<g fill="#333"><path d="M7.400 3h2.400l-1.200 1.600zM7.400 6h2.400l-1.200 1.600zM7.400 9h2.400l-1.200 1.600zM7.400 12h2.400l-1.200 1.600z"/><rect x="12.300" y="8" width="1.600" height="1.300"/><rect x="12.300" y="10.500" width="1.600" height="1.300"/><rect x="12.300" y="13" width="1.600" height="1.300"/></g><rect x="12" y="7" width="2.200" height="9" fill="#9ec8ee" opacity=".5"/></svg>
<span class="tx" id="lt20" style="left:119.7px;top:0.2px;letter-spacing:-0.15px">0 CPU_1[T324-XE-CD-10]</span></div>
<div class="row" style="left:6px;top:750px;width:597px;"><div class="bd" style="left:46px"></div><svg style="left:57px;top:14.3px" width="11" height="5.5" viewBox="0 0 11 5.5" ><path d="M.5 .3L5.5 5L10.5 .3" fill="none" stroke="#2f7df6" stroke-width="1.3" stroke-linecap="round" stroke-linejoin="round"/></svg>
<svg style="left:79px;top:8.9px" width="18.5" height="15" viewBox="0 0 18.5 15" ><g fill="none" stroke="#2f7df6" stroke-width="1.45" stroke-linejoin="round"><path d="M1 13.500V1.800q0-1 1-1h4l1.600 2.200h7.200q1 0 1 1v1.500"/><path d="M1.100 13.900l2.500-7.300q.3-.9 1.200-.9h11.900q1.100 0 .8 1l-2.200 6.500q-.3.900-1.200.9H2q-1 0-1-.9z"/></g></svg>
<span class="tx blue" id="lt21" style="left:104.7px">远程配置</span></div>
<div class="row" style="left:6px;top:782.8px;width:597px;"><div class="bd" style="left:61px"></div><svg style="left:72px;top:14.3px" width="11" height="5.5" viewBox="0 0 11 5.5" ><path d="M.5 .3L5.5 5L10.5 .3" fill="none" stroke="#2f7df6" stroke-width="1.3" stroke-linecap="round" stroke-linejoin="round"/></svg>
<svg style="left:94px;top:8.9px" width="18.5" height="15" viewBox="0 0 18.5 15" ><g fill="none" stroke="#2f7df6" stroke-width="1.45" stroke-linejoin="round"><path d="M1 13.500V1.800q0-1 1-1h4l1.600 2.200h7.200q1 0 1 1v1.500"/><path d="M1.100 13.900l2.500-7.300q.3-.9 1.200-.9h11.900q1.100 0 .8 1l-2.200 6.500q-.3.900-1.200.9H2q-1 0-1-.9z"/></g></svg>
<span class="tx blue" id="lt22" style="left:119.7px;letter-spacing:0.22px">EC_IO_System_1[EC-port1]</span></div>
<div class="row" style="left:6px;top:815.8px;width:597px;"><div class="bd" style="left:76px"></div><svg style="left:87px;top:14.3px" width="11" height="5.5" viewBox="0 0 11 5.5" ><path d="M.5 .3L5.5 5L10.5 .3" fill="none" stroke="#2f7df6" stroke-width="1.3" stroke-linecap="round" stroke-linejoin="round"/></svg>
<svg style="left:109px;top:8.9px" width="18.5" height="15" viewBox="0 0 18.5 15" ><g fill="none" stroke="#2f7df6" stroke-width="1.45" stroke-linejoin="round"><path d="M1 13.500V1.800q0-1 1-1h4l1.600 2.200h7.200q1 0 1 1v1.500"/><path d="M1.100 13.900l2.500-7.300q.3-.9 1.200-.9h11.900q1.100 0 .8 1l-2.200 6.500q-.3.900-1.200.9H2q-1 0-1-.9z"/></g></svg>
<span class="tx blue" id="lt23" style="left:134.7px;letter-spacing:0.13px">&lt;1001&gt; IO_Station_1[TD11-C2ECT13]</span></div>
<div class="row" style="left:6px;top:850.3px;width:597px;background:#e8e8ea;border-radius:5px;height:32.500px;"><svg style="left:125.5px;top:7px" width="16" height="18" viewBox="0 0 16 18" ><rect x=".7" y=".7" width="14.600" height="16.600" rx="1" fill="#fff" stroke="#3a2a1a" stroke-width="1.300"/><path d="M6 .7v16.600M11 .7v16.600" stroke="#3a2a1a" stroke-width="1.100"/><rect x="2" y="3" width="2.800" height="2.600" fill="#222"/><rect x="2" y="7" width="2.800" height="2.600" fill="#222"/>
<g fill="#333"><path d="M7.400 3h2.400l-1.200 1.600zM7.400 6h2.400l-1.200 1.600zM7.400 9h2.400l-1.200 1.600zM7.400 12h2.400l-1.200 1.600z"/><rect x="12.300" y="8" width="1.600" height="1.300"/><rect x="12.300" y="10.500" width="1.600" height="1.300"/><rect x="12.300" y="13" width="1.600" height="1.300"/></g><rect x="12" y="7" width="2.200" height="9" fill="#9ec8ee" opacity=".5"/></svg>
<span class="tx" id="lt24" style="left:149.7px;letter-spacing:-0.07px">0 TD11-C2ECT13_1[TD11-C2ECT13]</span></div>
</div><div class="vline" style="left:661.7px;top:75px;height:1851px"></div>
<div class="abs" style="left:665px;top:75px;width:1495.5px;height:36px;background:#deeafd"></div>
<div class="abs" style="left:665px;top:111px;width:1495.5px;height:39px;background:#e6f0fe"></div>
<div class="abs" style="left:665px;top:150px;width:1495.5px;height:1226px;background:#fff"></div>
<div class="abs" style="left:665px;top:150px;width:1495.5px;height:9px;background:linear-gradient(#d2d5da,#eeeff1 45%,#fff)"></div>
<svg style="left:680px;top:89px" width="18.5" height="9.5" viewBox="0 0 18.500 9.500" ><rect x=".7" y=".7" width="17.100" height="8.100" fill="none" stroke="#9a9a9a" stroke-width="1.300"/><g fill="#9a9a9a"><rect x="3.300" y="3.200" width="1" height="3.100"/><rect x="5.800" y="3.200" width="1" height="3.100"/></g><g fill="none" stroke="#9a9a9a" stroke-width=".9"><rect x="8.300" y="3.400" width="2.600" height="2.700" rx=".8"/><rect x="12.300" y="3.400" width="2.600" height="2.700" rx=".8"/></g></svg>
<div class="abs" id="tab1" style="left:713px;top:76.5px;line-height:36px;color:#8a8a8a;font-size:17.5px;letter-spacing:-.7px">PLC_1</div><svg style="left:838px;top:89px" width="18.5" height="9.5" viewBox="0 0 18.500 9.500" ><rect x=".7" y=".7" width="17.100" height="8.100" fill="none" stroke="#222" stroke-width="1.300"/><g fill="#222"><rect x="3.300" y="3.200" width="1" height="3.100"/><rect x="5.800" y="3.200" width="1" height="3.100"/></g><g fill="none" stroke="#222" stroke-width=".9"><rect x="8.300" y="3.400" width="2.600" height="2.700" rx=".8"/><rect x="12.300" y="3.400" width="2.600" height="2.700" rx=".8"/></g></svg>
<div class="abs" id="tab2" style="left:871px;top:76.5px;line-height:36px;color:#111;font-size:17.5px;letter-spacing:.4px">IO_Station_1</div><svg style="left:1013px;top:87.5px" width="9" height="9" viewBox="0 0 9 9" ><path d="M.5 .5l8 8M8.500 .5l-8 8" stroke="#222" stroke-width="1.200"/></svg>
<div class="abs" style="left:821px;top:108px;width:215px;height:3px;background:#2f7df6"></div>
<svg style="left:685.5px;top:119px" width="25" height="24" viewBox="0 0 25 24" ><path d="M2.500 0h10.500l11 11q1.500 1.500 0 3l-8.500 8.500q-1.500 1.500-3 0L1 11V1.500Q1 0 2.500 0z" fill="#0a5cdb"/><path d="M12.500 22.500q1.500 1.500 3 0l8.500-8.500" fill="none" stroke="#3d45a5" stroke-width="1.200"/><circle cx="8.300" cy="8" r="3.100" fill="#fff"/></svg>
<svg style="left:738px;top:119px" width="22" height="24" viewBox="0 0 22 24" ><g fill="none" stroke="#0a5cdb" stroke-width="1.500" stroke-linecap="round" stroke-linejoin="round"><path d="M6.500 13V4.500q0-1.500 1.300-1.500t1.300 1.500V11M9.100 10V2.300q0-1.500 1.300-1.500t1.300 1.500V10M11.700 10.500V3q0-1.500 1.300-1.500T14.300 3v8M14.300 11.500V6q0-1.400 1.300-1.400t1.300 1.400v8q2-3 3-3.500t1.300.8q-2 3-3.200 6.500T11.500 23q-4.500 0-6-3.500L1 12.500q-.5-1.500 1-1.800t3 2.300l1.500 2.500"/></g></svg>
<svg style="left:788.5px;top:119px" width="23" height="24" viewBox="0 0 23 24" ><g fill="#0a5cdb"><rect x="0" y="0" width="4.500" height="24"/><rect x="13" y="10" width="4" height="14"/><rect x="19" y="10" width="4" height="14"/><path d="M12 5l6-4v3h5v2h-5v3z"/></g><rect x="7.200" y="10" width="3.600" height="13.300" fill="#fff" stroke="#3d45a5" stroke-width="1.200"/></svg>
<div class="abs" style="left:832.5px;top:122.5px;width:2px;height:17px;background:#c9d0dc"></div>
<svg style="left:856px;top:119.9px" width="22" height="21.5" viewBox="0 0 22 21.500" ><rect x=".6" y=".6" width="20.800" height="20.300" rx="2.500" fill="#0a5cdb" stroke="#3d45a5" stroke-width="1" stroke-dasharray="3.500 3" stroke-opacity=".75"/><g fill="none" stroke="#cfe0fb" stroke-width="1.300" stroke-linecap="round" stroke-linejoin="round"><path d="M11 2.500v6.500M8.500 5L11 2.500 13.500 5M11 12.500v6.500M8.500 16.500L11 19l2.500-2.500"/></g></svg>
<svg style="left:901px;top:119.9px" width="22" height="21.5" viewBox="0 0 22 21.500" ><rect x=".6" y=".6" width="20.800" height="20.300" rx="2.500" fill="#0a5cdb" stroke="#3d45a5" stroke-width="1" stroke-dasharray="3.500 3" stroke-opacity=".75"/><g fill="none" stroke="#cfe0fb" stroke-width="1.300" stroke-linecap="round" stroke-linejoin="round"><path d="M2.500 10.750h6.500M5 8.250L2.500 10.750 5 13.250M12.500 10.750h7M17 8.250l2.500 2.500-2.500 2.500"/></g></svg>
<svg style="left:946px;top:119.9px" width="22" height="21.5" viewBox="0 0 22 21.500" ><rect x=".6" y=".6" width="20.800" height="20.300" rx="2.500" fill="#0a5cdb" stroke="#3d45a5" stroke-width="1" stroke-dasharray="3.500 3" stroke-opacity=".75"/><g fill="none" stroke="#cfe0fb" stroke-width="1.300" stroke-linecap="round" stroke-linejoin="round"><path d="M3 3l5.500 5.500M3 6.500V3h3.500M19 3l-5.500 5.500M15.500 3H19v3.500M3 18.500L8.500 13M3 15v3.500h3.500M19 18.500L13.500 13M19 15v3.500h-3.500"/></g></svg>
<svg style="left:680px;top:278px" width="540" height="930" viewBox="680 280 540 930" ><g transform="rotate(-45 976 408.700)"><rect x="835.500" y="391.700" width="279.500" height="34" rx="6.500" fill="#e9fbf0" stroke="#3fdc6c" stroke-width="2.600"/><text id="rotlabel" x="842.500" y="417.300" font-size="22.400" fill="#1fc955" font-family="Liberation Sans,sans-serif">TD11-C2ECT13_1</text></g><rect x="693.65" y="543.95" width="57.7" height="47.2" fill="#e8e9ed" stroke="#aab2c6" stroke-width="1.300" stroke-dasharray="5 5"/><rect x="1017.65" y="543.95" width="57.7" height="47.2" fill="#e8e9ed" stroke="#aab2c6" stroke-width="1.300" stroke-dasharray="5 5"/><rect x="1078.65" y="543.95" width="57.7" height="47.2" fill="#e8e9ed" stroke="#aab2c6" stroke-width="1.300" stroke-dasharray="5 5"/><rect x="1139.65" y="543.95" width="58.2" height="47.2" fill="#a9b2c9" stroke="#8f9bb8" stroke-width="1.300" stroke-dasharray="5 5"/><rect x="1017" y="594" width="59" height="600.700" fill="#dcdfe9"/><rect x="1078" y="594" width="59" height="600.700" fill="#dcdfe9"/><rect x="1139" y="594" width="59.500" height="600.700" fill="#a9b2c9"/><rect x="753.900" y="543.100" width="261.500" height="52" fill="#e8fbee"/><rect x="755.200" y="544.400" width="258.900" height="46.600" fill="#d5f5de" stroke="#4fdf74" stroke-width="2.600"/><text x="884.600" y="574" font-size="24" fill="#1fc955" text-anchor="middle" font-family="Liberation Sans,sans-serif">0</text><text x="1046.500" y="574" font-size="24" fill="#111" text-anchor="middle" font-family="Liberation Sans,sans-serif">1</text><text x="1107.500" y="574" font-size="24" fill="#111" text-anchor="middle" font-family="Liberation Sans,sans-serif">2</text><text x="1168.700" y="573" font-size="22" fill="#111" text-anchor="middle" font-family="Liberation Sans,sans-serif">...</text><text x="1168.700" y="831" font-size="23" fill="#111" text-anchor="middle" font-family="Liberation Sans,sans-serif">3</text><text x="1168.700" y="877" font-size="23" fill="#111" text-anchor="middle" font-family="Liberation Sans,sans-serif">-</text><text x="1168.700" y="924.500" font-size="23" fill="#111" text-anchor="middle" font-family="Liberation Sans,sans-serif">32</text><rect x="753.900" y="595" width="261.500" height="598.300" fill="#5a6b5d"/><rect x="753.900" y="595" width="261.500" height="5" fill="#788b7c"/><rect x="753.900" y="1187.500" width="261.500" height="4" fill="#3c4a40"/><rect x="756.500" y="595" width="2" height="596" fill="#6d7f70"/><rect x="876" y="597" width="1.500" height="593" fill="#3c4a40"/><rect x="877.5" y="597" width="1.200" height="593" fill="#788b7c"/><rect x="955.2" y="597" width="1.500" height="593" fill="#3c4a40"/><rect x="956.7" y="597" width="1.200" height="593" fill="#788b7c"/><rect x="1010.500" y="597" width="1.500" height="593" fill="#3c4a40"/><text x="814" y="643.500" font-size="11.500" fill="#d4d9e2" text-anchor="middle" font-family="Liberation Sans,sans-serif">X1</text><text x="814" y="834.500" font-size="11.500" fill="#d4d9e2" text-anchor="middle" font-family="Liberation Sans,sans-serif">X2</text><rect x="785.500" y="669.3" width="59.300" height="58.200" fill="#4a6a6b" stroke="#15982f" stroke-width="4"/><path d="M791 687.3 H803.700 V681.5 H809 V676 H821.800 V681.5 H827.500 V687.3 H840 V719 H791z" fill="#384d4c"/><rect x="799" y="700.4" width="2" height="13.600" fill="#7f8050"/><rect x="803.5" y="700.4" width="2" height="13.600" fill="#7f8050"/><rect x="808" y="700.4" width="2" height="13.600" fill="#7f8050"/><rect x="812.5" y="700.4" width="2" height="13.600" fill="#7f8050"/><rect x="817" y="700.4" width="2" height="13.600" fill="#7f8050"/><rect x="821.5" y="700.4" width="2" height="13.600" fill="#7f8050"/><rect x="826" y="700.4" width="2" height="13.600" fill="#7f8050"/><rect x="830.5" y="700.4" width="2" height="13.600" fill="#7f8050"/><rect x="785.500" y="860.5" width="59.300" height="58.200" fill="#4a6a6b" stroke="#15982f" stroke-width="4"/><path d="M791 878.5 H803.700 V872.7 H809 V867.2 H821.800 V872.7 H827.500 V878.5 H840 V910.2 H791z" fill="#384d4c"/><rect x="799" y="891.6" width="2" height="13.600" fill="#7f8050"/><rect x="803.5" y="891.6" width="2" height="13.600" fill="#7f8050"/><rect x="808" y="891.6" width="2" height="13.600" fill="#7f8050"/><rect x="812.5" y="891.6" width="2" height="13.600" fill="#7f8050"/><rect x="817" y="891.6" width="2" height="13.600" fill="#7f8050"/><rect x="821.5" y="891.6" width="2" height="13.600" fill="#7f8050"/><rect x="826" y="891.6" width="2" height="13.600" fill="#7f8050"/><rect x="830.5" y="891.6" width="2" height="13.600" fill="#7f8050"/><rect x="891.200" y="662" width="15.200" height="10" rx="5" fill="#2fc25e"/><text x="911" y="671" font-size="11" fill="#d4d9e2" font-family="Liberation Sans,sans-serif">PWR</text><rect x="891.200" y="687.5" width="15.200" height="10" rx="5" fill="#a0522d"/><text x="911" y="696.5" font-size="11" fill="#d4d9e2" font-family="Liberation Sans,sans-serif">SF</text><rect x="891.200" y="713" width="15.200" height="10" rx="5" fill="#a0522d"/><text x="911" y="722" font-size="11" fill="#d4d9e2" font-family="Liberation Sans,sans-serif">BF</text><rect x="891.200" y="738.3" width="15.200" height="10" rx="5" fill="#d4a94a"/><text x="911" y="747.3" font-size="11" fill="#d4d9e2" font-family="Liberation Sans,sans-serif">MT</text><rect x="891.200" y="789.3" width="15.200" height="10" rx="5" fill="#2fc25e"/><text x="911" y="798.3" font-size="11" fill="#d4d9e2" font-family="Liberation Sans,sans-serif">LINK 1</text><rect x="891.200" y="814.6" width="15.200" height="10" rx="5" fill="#d4a94a"/><text x="911" y="823.6" font-size="11" fill="#d4d9e2" font-family="Liberation Sans,sans-serif">ACT 1</text><rect x="891.200" y="840.3" width="15.200" height="10" rx="5" fill="#2fc25e"/><text x="911" y="849.3" font-size="11" fill="#d4d9e2" font-family="Liberation Sans,sans-serif">LINK 2</text><rect x="891.200" y="865.6" width="15.200" height="10" rx="5" fill="#d4a94a"/><text x="911" y="874.6" font-size="11" fill="#d4d9e2" font-family="Liberation Sans,sans-serif">ACT 2</text><rect x="961.500" y="624" width="47" height="25.800" fill="none" stroke="#3c4a40" stroke-width="1.400"/><rect x="968.600" y="640" width="33" height="5" rx="1" fill="#2f3f38"/><text x="985" y="637" font-size="11" fill="#d4d9e2" text-anchor="middle" font-family="Liberation Sans,sans-serif">PNRT</text><path d="M1012 653 H971 Q958.500 653 958.500 665.500 V881.500 Q958.500 894 971 894 H1012" fill="none" stroke="#3c4a40" stroke-width="1.500"/><circle cx="916.300" cy="906.800" r="5.300" fill="none" stroke="#3c4a40" stroke-width="1.400"/><path d="M878.500 1026.800 H955 M889.500 1026.800 A27 19 0 0 1 943.300 1026.800" fill="none" stroke="#3c4a40" stroke-width="1.500"/><text x="916.300" y="1057" font-size="11.500" fill="#d4d9e2" text-anchor="middle" font-family="Liberation Sans,sans-serif">Service</text><text x="916.300" y="1072.500" font-size="11.500" fill="#d4d9e2" text-anchor="middle" font-family="Liberation Sans,sans-serif">X3</text><path d="M1012 905.3 H970 Q958.500 905.3 958.500 916.8 V950.3 L972 961.3 L958.500 972.3 V1005.8 Q958.500 1017.3 970 1017.3 H1012" fill="none" stroke="#3c4a40" stroke-width="1.500"/><circle cx="973.4" cy="920.7" r="9.800" fill="#3b4f4d"/><rect x="963.6" y="918.5" width="19.600" height="4.400" fill="#a3a850"/><circle cx="996.7" cy="920.7" r="9.800" fill="#3b4f4d"/><rect x="986.9" y="918.5" width="19.600" height="4.400" fill="#a3a850"/><circle cx="973.4" cy="947.9" r="9.800" fill="#3b4f4d"/><rect x="963.6" y="945.7" width="19.600" height="4.400" fill="#a3a850"/><circle cx="996.7" cy="947.9" r="9.800" fill="#3b4f4d"/><rect x="986.9" y="945.7" width="19.600" height="4.400" fill="#a3a850"/><circle cx="973.4" cy="975.2" r="9.800" fill="#3b4f4d"/><rect x="963.6" y="973" width="19.600" height="4.400" fill="#a3a850"/><circle cx="996.7" cy="975.2" r="9.800" fill="#3b4f4d"/><rect x="986.9" y="973" width="19.600" height="4.400" fill="#a3a850"/><circle cx="973.4" cy="1002.4" r="9.800" fill="#3b4f4d"/><rect x="963.6" y="1000.2" width="19.600" height="4.400" fill="#a3a850"/><circle cx="996.7" cy="1002.4" r="9.800" fill="#3b4f4d"/><rect x="986.9" y="1000.2" width="19.600" height="4.400" fill="#a3a850"/><path d="M1012 1029 H970 Q958.500 1029 958.500 1040.5 V1074 L972 1085 L958.500 1096 V1129.5 Q958.500 1141 970 1141 H1012" fill="none" stroke="#3c4a40" stroke-width="1.500"/><circle cx="973.4" cy="1043.7" r="9.800" fill="#3b4f4d"/><rect x="963.6" y="1041.5" width="19.600" height="4.400" fill="#a3a850"/><circle cx="996.7" cy="1043.7" r="9.800" fill="#3b4f4d"/><rect x="986.9" y="1041.5" width="19.600" height="4.400" fill="#a3a850"/><circle cx="973.4" cy="1071.2" r="9.800" fill="#3b4f4d"/><rect x="963.6" y="1069" width="19.600" height="4.400" fill="#a3a850"/><circle cx="996.7" cy="1071.2" r="9.800" fill="#3b4f4d"/><rect x="986.9" y="1069" width="19.600" height="4.400" fill="#a3a850"/><circle cx="973.4" cy="1098.5" r="9.800" fill="#3b4f4d"/><rect x="963.6" y="1096.3" width="19.600" height="4.400" fill="#a3a850"/><circle cx="996.7" cy="1098.5" r="9.800" fill="#3b4f4d"/><rect x="986.9" y="1096.3" width="19.600" height="4.400" fill="#a3a850"/><circle cx="973.4" cy="1125.7" r="9.800" fill="#3b4f4d"/><rect x="963.6" y="1123.5" width="19.600" height="4.400" fill="#a3a850"/><circle cx="996.7" cy="1125.7" r="9.800" fill="#3b4f4d"/><rect x="986.9" y="1123.5" width="19.600" height="4.400" fill="#a3a850"/><rect x="961.500" y="1162" width="47.500" height="30" fill="none" stroke="#3c4a40" stroke-width="1.400"/><rect x="755.200" y="544.400" width="258.900" height="647.600" fill="none" stroke="#30c95c" stroke-opacity=".8" stroke-width="3"/></svg>
<div class="abs" style="left:2142px;top:715px;width:18.5px;height:54px;background:#e6f0fe;border-radius:4px 0 0 4px"></div>
<svg style="left:2145px;top:738px" width="12.5" height="9" viewBox="0 0 12.500 9" ><path d="M5.500 .5L1 4.500l4.500 4M11.500 .5L7 4.500l4.500 4" fill="none" stroke="#1d63e0" stroke-width="1.400" stroke-linecap="round" stroke-linejoin="round"/></svg>
<svg style="left:1955.3px;top:927.2px" width="19" height="28" viewBox="0 0 19 28" ><path d="M.6 .8V23.300L5.600 18.900 9 26.300 13.500 24.200 10.100 18.300 17.400 18z" fill="#fff" stroke="#222" stroke-width="1.200" stroke-linejoin="round"/></svg>
<div class="vline" style="left:2160.500px;top:75px;height:1851px"></div>
<div class="abs" style="left:665px;top:1375.8px;width:1495.5px;height:2.5px;background:#a6c5fa"></div>
<div class="abs" style="left:665px;top:1378.2px;width:1495.5px;height:33.8px;background:#deeafd"></div>
<div class="abs" style="left:665px;top:1412px;width:1495.5px;height:514px;background:#f7fafd"></div>
<div class="abs" style="left:764px;top:1375.8px;width:99.7px;height:36.2px;background:#fdfeff;border-top:2.600px solid #2f7df6"></div>
<svg style="left:683.3px;top:1385.6px" width="17.5" height="17.5" viewBox="0 0 17.500 17.500" ><circle cx="8.750" cy="8.750" r="7.900" fill="none" stroke="#8c8c8c" stroke-width="1.400"/><text x="8.750" y="13.200" font-size="12.500" font-style="italic" font-weight="bold" font-family="Liberation Serif,serif" fill="#8c8c8c" text-anchor="middle">i</text></svg>
<div class="abs" style="left:710.3px;top:1381.6px;line-height:30px;white-space:nowrap;color:#7d7d7d">信息</div>
<svg style="left:784px;top:1385.6px" width="18" height="17.2" viewBox="0 0 18 17.200" ><rect x="0" y="0" width="18" height="17.200" rx="3.500" fill="#0a5cdb"/><rect x="0" y="14" width="18" height="3.200" rx="1.600" fill="#3d45a5" opacity=".7"/><rect x="2.300" y="4" width="13.400" height="1.600" fill="#fff"/><rect x="2.800" y="8.200" width="4.400" height="4.400" fill="none" stroke="#fff" stroke-width="1.400"/><rect x="9.500" y="8" width="6" height="1.600" fill="#fff"/><rect x="9.500" y="11.300" width="6" height="1.600" fill="#fff"/></svg>
<div class="abs" style="left:810.8px;top:1381.6px;line-height:30px;white-space:nowrap;color:#2f7df6">属性</div>
<svg style="left:883.6px;top:1384.5px" width="18.5" height="18.5" viewBox="0 0 18.500 18.500" ><g fill="none" stroke="#a3a3a3" stroke-width="1.300"><path d="M3 3V2q0-1.300 1.300-1.300h11.200q1.300 0 1.300 1.300v11.200q0 1.300-1.300 1.300h-1"/><rect x=".7" y="3.300" width="13.800" height="14" rx="1.300"/><path d="M7.600 6.500v5.500M7.600 13.800v1.300" stroke-width="1.600"/></g></svg>
<div class="abs" id="bt3" style="left:911px;top:1381.6px;line-height:30px;white-space:nowrap;color:#7d7d7d">IO冲突表</div>
<svg style="left:1022px;top:1384.5px" width="16" height="18.5" viewBox="0 0 16 18.500" ><g fill="none" stroke="#a3a3a3" stroke-width="1.200"><path d="M7 14H2q-1.300 0-1.300-1.300V2q0-1.300 1.300-1.300h9.500q1.300 0 1.300 1.300v8"/><path d="M3 4h7.500M3 7h7.500M3 10h4" stroke-dasharray="2 1"/><path d="M9.500 16.500h5M9.500 16.500l2-1.800M9.500 16.500l2 1.800M14.500 12v4.500"/></g></svg>
<div class="abs" id="bt4" style="left:1047.8px;top:1381.6px;line-height:30px;white-space:nowrap;color:#7d7d7d">硬件IO通道表</div>
<div class="abs" id="btr" style="left:1858px;top:1383.3px;line-height:30px;white-space:nowrap;color:#1a1a1a;letter-spacing:-.19px">TD11-C2ECT13_1</div>
<div class="abs" style="left:665px;top:1426px;width:290px;height:483.4px;overflow:hidden"><div class="abs" style="left:4px;top:1.9px;width:276px;height:32px;background:#d3e3fc;border-radius:5px"><svg style="left:10.7px;top:12.8px" width="14.7" height="7.8" viewBox="0 0 14.7 7.8" ><path d="M.5 .3L7.35 7.3L14.2 .3" fill="none" stroke="#2f7df6" stroke-width="1.6" stroke-linecap="round" stroke-linejoin="round"/></svg>
<span class="abs" id="nv0" style="left:35px;top:1.7px;line-height:32px;white-space:nowrap;color:#2f7df6">TD11-C2ECT13_1</span></div>
<div class="abs" style="left:4px;top:35.4px;width:276px;height:32px;background:#eff0f4;border-radius:5px"><svg style="left:22px;top:12.8px" width="14.7" height="7.8" viewBox="0 0 14.7 7.8" ><path d="M.5 .3L7.35 7.3L14.2 .3" fill="none" stroke="#2f7df6" stroke-width="1.6" stroke-linecap="round" stroke-linejoin="round"/></svg>
<span class="abs" id="nv1" style="left:46.2px;top:1.7px;line-height:32px;white-space:nowrap;color:#2f7df6">基本信息</span></div>
<div class="abs" style="left:4px;top:68.9px;width:276px;height:32px;background:#fff;border-bottom:1.25px solid #e0e3e9;border-radius:5px"><span class="abs" id="nv2" style="left:58.5px;top:1.7px;line-height:32px;white-space:nowrap;color:#1a1a1a">项目信息</span></div>
<div class="abs" style="left:4px;top:102.4px;width:276px;height:32px;background:#fff;border-bottom:1.25px solid #e0e3e9;border-radius:5px"><span class="abs" id="nv3" style="left:58.5px;top:1.7px;line-height:32px;white-space:nowrap;color:#1a1a1a">设备信息</span></div>
<div class="abs" style="left:4px;top:135.9px;width:276px;height:32px;background:#eff0f4;border-radius:5px"><svg style="left:22px;top:12.8px" width="14.7" height="7.8" viewBox="0 0 14.7 7.8" ><path d="M.5 .3L7.35 7.3L14.2 .3" fill="none" stroke="#2f7df6" stroke-width="1.6" stroke-linecap="round" stroke-linejoin="round"/></svg>
<span class="abs" id="nv4" style="left:46.2px;top:1.7px;line-height:32px;white-space:nowrap;color:#2f7df6">EtherCAT接口</span></div>
<div class="abs" style="left:4px;top:169.4px;width:276px;height:32px;background:#fff;border-bottom:1.25px solid #e0e3e9;border-radius:5px"><span class="abs" id="nv5" style="left:58.5px;top:1.7px;line-height:32px;white-space:nowrap;color:#1a1a1a">常规属性</span></div>
<div class="abs" style="left:4px;top:202.9px;width:276px;height:32px;background:#fff;border-bottom:1.25px solid #e0e3e9;border-radius:5px"><span class="abs" id="nv6" style="left:58.5px;top:1.7px;line-height:32px;white-space:nowrap;color:#1a1a1a">地址</span></div>
<div class="abs" style="left:4px;top:236.4px;width:276px;height:32px;background:#fff;border-bottom:1.25px solid #e0e3e9;border-radius:5px"><span class="abs" id="nv7" style="left:58.5px;top:1.7px;line-height:32px;white-space:nowrap;color:#1a1a1a">端口1</span></div>
<div class="abs" style="left:4px;top:269.9px;width:276px;height:32px;background:#fff;border-bottom:1.25px solid #e0e3e9;border-radius:5px"><span class="abs" id="nv8" style="left:58.5px;top:1.7px;line-height:32px;white-space:nowrap;color:#1a1a1a">端口2</span></div>
<div class="abs" style="left:4px;top:303.4px;width:276px;height:32px;background:#eff0f4;border-radius:5px"><svg style="left:22px;top:12.8px" width="14.7" height="7.8" viewBox="0 0 14.7 7.8" ><path d="M.5 .3L7.35 7.3L14.2 .3" fill="none" stroke="#2f7df6" stroke-width="1.6" stroke-linecap="round" stroke-linejoin="round"/></svg>
<span class="abs" id="nv9" style="left:46.2px;top:1.7px;line-height:32px;white-space:nowrap;color:#2f7df6">状态模块</span></div>
<div class="abs" style="left:4px;top:336.9px;width:276px;height:32px;background:#fff;border-bottom:1.25px solid #e0e3e9;border-radius:5px"><svg style="left:34.4px;top:12.8px" width="14.7" height="7.8" viewBox="0 0 14.7 7.8" ><path d="M.5 .3L7.35 7.3L14.2 .3" fill="none" stroke="#2f7df6" stroke-width="1.6" stroke-linecap="round" stroke-linejoin="round"/></svg>
<span class="abs" id="nv10" style="left:58.5px;top:1.7px;line-height:32px;white-space:nowrap;color:#2f7df6">I/O地址</span></div>
<div class="abs" style="left:4px;top:370.4px;width:276px;height:32px;background:#fff;border-bottom:1.25px solid #e0e3e9;border-radius:5px"><span class="abs" id="nv11" style="left:70.5px;top:1.7px;line-height:32px;white-space:nowrap;color:#1a1a1a">输入地址</span></div>
<div class="abs" style="left:4px;top:403.9px;width:276px;height:32px;background:#fff;border-bottom:1.25px solid #e0e3e9;border-radius:5px"><svg style="left:34.4px;top:12.8px" width="14.7" height="7.8" viewBox="0 0 14.7 7.8" ><path d="M.5 .3L7.35 7.3L14.2 .3" fill="none" stroke="#2f7df6" stroke-width="1.6" stroke-linecap="round" stroke-linejoin="round"/></svg>
<span class="abs" id="nv12" style="left:58.5px;top:1.7px;line-height:32px;white-space:nowrap;color:#2f7df6">模块参数</span></div>
<div class="abs" style="left:4px;top:437.4px;width:276px;height:32px;background:#fff;border-bottom:1.25px solid #e0e3e9;border-radius:5px"><span class="abs" id="nv13" style="left:70.5px;top:1.7px;line-height:32px;white-space:nowrap;color:#1a1a1a">ErrEN</span></div>
<div class="abs" style="left:4px;top:470.9px;width:276px;height:32px;background:#fff;border-bottom:1.25px solid #e0e3e9;border-radius:5px"><span class="abs" id="nv14" style="left:70.5px;top:1.7px;line-height:32px;white-space:nowrap;color:#1a1a1a">CNT Mode</span></div>
</div>
<div class="abs" style="left:951px;top:1426.8px;width:9.5px;height:289.5px;background:#dddee2;border-radius:5px"></div>
<div class="abs" style="left:960.2px;top:1426px;width:2.5px;height:483.4px;background:#eceef2"></div>
<div class="abs" style="left:965px;top:1426px;width:1195px;height:483.4px;overflow:hidden"><div class="abs" style="left:35.5px;top:-13px;line-height:30px;white-space:nowrap;color:#8a8a8a;font-size:17px;transform:rotate(-20deg)">&gt;</div>
<div class="abs" style="left:58.6px;top:-12px;line-height:30px;white-space:nowrap;font-size:16.250px;color:#2f7df6">设备信息</div>
<div class="abs" style="left:31px;top:23px;width:1133px;height:1.300px;background:#6aa3f8"></div><div class="abs" style="left:58.6px;top:37.5px;line-height:30px;white-space:nowrap;color:#1a1a1a;font-size:16.250px">品牌</div>
<div class="abs" id="v1" style="left:246.3px;top:36.5px;line-height:30px;white-space:nowrap;color:#222;font-family:'Liberation Sans','Noto Sans CJK SC',sans-serif">BAOSIGHT</div>
<div class="abs" style="left:58.6px;top:80px;line-height:30px;white-space:nowrap;color:#1a1a1a;font-size:16.250px">品牌ID</div>
<div class="abs" style="left:246.3px;top:78.7px;line-height:30px;white-space:nowrap;color:#222;font-family:'Liberation Sans','Noto Sans CJK SC',sans-serif">1483</div>
<div class="abs" style="left:58.6px;top:121.5px;line-height:30px;white-space:nowrap;color:#1a1a1a;font-size:16.250px">设备型号</div>
<div class="abs" id="v3" style="left:246.3px;top:120.5px;line-height:30px;white-space:nowrap;color:#222;font-family:'Liberation Sans','Noto Sans CJK SC',sans-serif">TD11-C2ECT13</div>
<div class="abs" style="left:58.6px;top:164px;line-height:30px;white-space:nowrap;color:#1a1a1a;font-size:16.250px">设备描述</div>
<div class="abs" style="left:231px;top:160.6px;width:467.700px;height:71px;background:#f0f0f4;border-radius:5px"></div><div class="abs" id="v4" style="left:246.3px;top:164px;line-height:30px;white-space:nowrap;color:#222;font-family:'Liberation Sans','Noto Sans CJK SC',sans-serif">EtherCAT 耦合器</div>
<svg style="left:686px;top:218px" width="10.5" height="10.5" viewBox="0 0 10.500 10.500" ><path d="M1 9.500L9.500 1M6 9.500L9.500 6" stroke="#444" stroke-width="1.200" fill="none"/></svg>
<div class="abs" id="sec2" style="left:31px;top:257.5px;line-height:30px;white-space:nowrap;font-size:16.250px;color:#2f7df6">EtherCAT接口</div>
<div class="abs" style="left:31px;top:292.5px;width:1133px;height:1.300px;background:#6aa3f8"></div><div class="abs" style="left:35.5px;top:305.5px;line-height:30px;white-space:nowrap;color:#8a8a8a;font-size:18px">&gt;</div>
<div class="abs" style="left:58.6px;top:306.3px;line-height:30px;white-space:nowrap;font-size:16.250px;color:#2f7df6">常规属性</div>
<div class="abs" style="left:31px;top:341px;width:1133px;height:1.300px;background:#6aa3f8"></div><div class="abs" style="left:58.6px;top:356.5px;line-height:30px;white-space:nowrap;color:#1a1a1a;font-size:16.250px">接口名称</div>
<div class="abs" style="left:246.3px;top:356.5px;line-height:30px;white-space:nowrap;color:#222;font-family:'Liberation Sans','Noto Sans CJK SC',sans-serif">接口_1</div>
<div class="abs" style="left:58.6px;top:398.1px;line-height:30px;white-space:nowrap;color:#1a1a1a;font-size:16.250px">注释</div>
<div class="abs" style="left:231px;top:394.3px;width:469.400px;height:73px;background:#fff;border:1.250px solid #e4e6ea;border-radius:5px"></div><svg style="left:687.5px;top:454.5px" width="10.5" height="10.5" viewBox="0 0 10.500 10.500" ><path d="M1 9.500L9.500 1M6 9.500L9.500 6" stroke="#444" stroke-width="1.200" fill="none"/></svg>
</div>
<div class="abs" style="left:2163.5px;top:75px;width:329px;height:1851px;background:#f7fafd"></div>
<div class="abs" style="left:2163.5px;top:75px;width:329px;height:36px;background:#deeafd"></div>
<div class="abs" style="left:2177px;top:79.9px;line-height:30px;white-space:nowrap;color:#000">硬件目录</div>
<div class="abs" style="left:2163.5px;top:113px;width:328px;height:33px;background:#d6e5fc;border-radius:5px"></div>
<svg style="left:2172.8px;top:126.5px" width="14.5" height="7.5" viewBox="0 0 14.5 7.5" ><path d="M.5 .3L7.25 7L14 .3" fill="none" stroke="#2f7df6" stroke-width="1.6" stroke-linecap="round" stroke-linejoin="round"/></svg>
<div class="abs" style="left:2197.5px;top:114.8px;line-height:30px;white-space:nowrap;font-size:16.250px;color:#2f7df6">目录</div>
<div class="abs" style="left:2176.8px;top:167px;width:18.2px;height:18.2px;background:#2f7df6;border-radius:3.500px"></div>
<svg style="left:2176.8px;top:167px" width="18.2" height="18.2" viewBox="0 0 18.200 18.200" ><path d="M4 9.300l3.800 3.800 6.700-7.600" fill="none" stroke="#fff" stroke-width="2.100" stroke-linecap="round" stroke-linejoin="round"/></svg>
<div class="abs" style="left:2206.7px;top:161.8px;line-height:30px;white-space:nowrap;font-size:16.250px;color:#111">过滤</div>
<div class="abs" style="left:2266px;top:164px;width:2px;height:24px;background:#e2e4e9"></div>
<div class="abs" style="left:2288.6px;top:156.8px;width:121.3px;height:37.8px;background:#fff;border:1.250px solid #e8eaee;border-radius:6px"></div>
<div class="abs" style="left:2303px;top:160.1px;line-height:30px;white-space:nowrap;font-size:16.800px;color:#9a9a9a">搜索</div>
<svg style="left:2427px;top:166px" width="18.5" height="18" viewBox="0 0 18.500 18" ><g fill="none" stroke="#2f7df6" stroke-width="2" stroke-linecap="round" stroke-linejoin="round"><path d="M1 1.200h16.500M1 8.500h5M1 16h3.500M11.800 6v10M7.500 11.800l4.300 4.500 4.300-4.500"/></g></svg>
<svg style="left:2463px;top:166px" width="18.5" height="18" viewBox="0 0 18.500 18" ><g fill="none" stroke="#2f7df6" stroke-width="2" stroke-linecap="round" stroke-linejoin="round"><path d="M1 1.200h16.500M1 8.500h5M1 16h3.500M11.800 16.500V6.500M7.500 10.800l4.300-4.500 4.300 4.500"/></g></svg>
<div class="abs" style="left:2169px;top:207px;width:308.6px;height:37.6px;background:#d3e3fc;border-radius:7px"></div>
<svg style="left:2181px;top:220px" width="7" height="12.5" viewBox="0 0 7 12.500" ><path d="M1 1l5 5.250-5 5.250" fill="none" stroke="#a0a0a0" stroke-width="1.400" stroke-linecap="round" stroke-linejoin="round"/></svg>
<svg style="left:2204px;top:217.5px" width="16" height="17.5" viewBox="0 0 16 17.500" ><g fill="none" stroke="#9a9a9a" stroke-width="1.200"><rect x=".6" y=".6" width="14.800" height="16.300" rx="1"/><path d="M6.500 .6v16.300"/><path d="M9 3v4M11 3v4" /><rect x="12.300" y="3" width="1.500" height="4" stroke-width=".8"/><path d="M8.500 10h5.500M8.500 12.300h5.500M8.500 14.600h5.500" stroke-width=".9"/></g><circle cx="3.500" cy="14" r="1" fill="#9a9a9a"/></svg>
<div class="abs" id="rdev" style="left:2229.5px;top:211.5px;line-height:30px;white-space:nowrap;color:#111;letter-spacing:-.58px">Remote Device</div>
<div class="abs" style="left:2162.5px;top:1300.5px;width:326.5px;height:7.5px;background:#cdcdcd;border-radius:4px"></div>
<div class="abs" style="left:2163px;top:1309px;width:329.5px;height:2.4px;background:#b0ccfb"></div>
<div class="abs" style="left:2162.5px;top:1313px;width:329px;height:33px;background:#d6e5fc;border-radius:5px;border-top:1px solid #c9d1de"></div>
<svg style="left:2171.7px;top:1326.5px" width="14.5" height="7.5" viewBox="0 0 14.5 7.5" ><path d="M.5 .3L7.25 7L14 .3" fill="none" stroke="#2f7df6" stroke-width="1.6" stroke-linecap="round" stroke-linejoin="round"/></svg>
<div class="abs" style="left:2197px;top:1314.8px;line-height:30px;white-space:nowrap;font-size:16.250px;color:#2f7df6">信息</div>
<div class="abs" style="left:2211px;top:1364px;width:240px;height:240px;background:#e2e3e7;border-radius:5px"></div>
<svg style="left:2211px;top:1364px" width="240" height="240" viewBox="2211 1366 240 240" ><rect x="2250.300" y="1392" width="161.400" height="188" rx="13" fill="#bdbec1"/><rect x="2313" y="1406.700" width="85.600" height="159" rx="11" fill="#e2e3e7"/><rect x="2322" y="1414.800" width="12.800" height="59.500" rx="6.400" fill="#bdbec1"/><rect x="2352" y="1415.600" width="33.800" height="58.700" fill="#bdbec1"/><circle cx="2328.8" cy="1491.4" r="6" fill="#bdbec1"/><circle cx="2346.8" cy="1491.4" r="6" fill="#bdbec1"/><circle cx="2364.8" cy="1491.4" r="6" fill="#bdbec1"/><circle cx="2382.9" cy="1491.4" r="6" fill="#bdbec1"/><circle cx="2328.8" cy="1518.5" r="6" fill="#bdbec1"/><circle cx="2346.8" cy="1518.5" r="6" fill="#bdbec1"/><circle cx="2364.8" cy="1518.5" r="6" fill="#bdbec1"/><circle cx="2382.9" cy="1518.5" r="6" fill="#bdbec1"/><circle cx="2328.8" cy="1545.5" r="6" fill="#bdbec1"/><circle cx="2346.8" cy="1545.5" r="6" fill="#bdbec1"/><circle cx="2364.8" cy="1545.5" r="6" fill="#bdbec1"/><circle cx="2382.9" cy="1545.5" r="6" fill="#bdbec1"/><circle cx="2282.600" cy="1555" r="11.300" fill="#e2e3e7"/></svg>
<div class="abs" style="left:2179.3px;top:1629.7px;line-height:30px;white-space:nowrap;color:#111">供应商</div>
<div class="abs" style="left:2279px;top:1628.7px;line-height:30px;white-space:nowrap;color:#111;font-weight:bold">-</div>
<div class="abs" style="left:2179.3px;top:1668.6px;line-height:30px;white-space:nowrap;color:#111">类别</div>
<div class="abs" style="left:2279px;top:1667.6px;line-height:30px;white-space:nowrap;color:#111;font-weight:bold">-</div>
<div class="abs" style="left:2179.3px;top:1707.8px;line-height:30px;white-space:nowrap;color:#111">产品型号</div>
<div class="abs" style="left:2279px;top:1706.8px;line-height:30px;white-space:nowrap;color:#111;font-weight:bold">-</div>
<div class="abs" style="left:2179.3px;top:1746.7px;line-height:30px;white-space:nowrap;color:#111">产品类型</div>
<div class="abs" style="left:2279px;top:1745.7px;line-height:30px;white-space:nowrap;color:#111;font-weight:bold">-</div>
<div class="abs" style="left:2179.3px;top:1785.5px;line-height:30px;white-space:nowrap;color:#111">订货号</div>
<div class="abs" style="left:2279px;top:1784.5px;line-height:30px;white-space:nowrap;color:#111;font-weight:bold">-</div>
<div class="abs" style="left:2179.3px;top:1824.6px;line-height:30px;white-space:nowrap;color:#111">固件版本</div>
<div class="abs" style="left:2179.3px;top:1861.7px;line-height:30px;white-space:nowrap;color:#111">描述</div>
<div class="abs" style="left:2270.5px;top:1861.7px;line-height:30px;white-space:nowrap;color:#333;font-size:15px">-</div>
<div class="abs" style="left:2270px;top:1820px;width:213px;height:35.6px;background:#efeff3;border-radius:6px"></div>
<svg style="left:2458.5px;top:1833px" width="18" height="10" viewBox="0 0 18 10" ><path d="M1.500 1.500L9 8.500l7.500-7" fill="none" stroke="#c2c2c2" stroke-width="2.600" stroke-linecap="round" stroke-linejoin="round"/></svg>
<div class="abs" style="left:2162.5px;top:1919px;width:303.5px;height:8px;background:#cdcdcd;border-radius:4px 4px 0 0"></div>
<div class="vline" style="left:2492.3px;top:75px;height:1851px"></div>
<div class="abs" style="left:2495px;top:75px;width:48px;height:1851px;background:#deeafd"></div>
<div class="abs" style="left:2492.5px;top:75px;width:50.5px;height:52px;background:#b9d3fb;border-left:2.500px solid #a6c5fa;border-top:1px solid #aab4c4"></div>
<svg style="left:2502.5px;top:87px" width="33" height="27.5" viewBox="0 0 33 27.500" ><path d="M3.400 1.500Q3.800 0 5.300 0h22.400q1.500 0 1.900 1.500L32.700 16H.3z" fill="#0a5cdb"/><rect x=".3" y="18" width="32.400" height="9.300" rx="2" fill="#3d45a5"/><rect x="24.500" y="21" width="4.200" height="2.400" fill="#fff"/></svg>
<div class="abs" style="left:0px;top:1926px;width:2543px;height:33px;background:#007acc"></div>
<div class="abs" style="left:2428px;top:1926px;width:115px;height:33px;background:#8a4cff"></div>
<svg style="left:24.2px;top:1933.7px" width="21.6" height="21.6" viewBox="0 0 22 22" ><circle cx="11" cy="11" r="11" fill="#22dd33"/><path d="M1.200 11a9.800 9.800 0 0 1 19.600 0z" fill="#007acc"/><circle cx="11" cy="11" r="10.200" fill="none" stroke="#22dd33" stroke-width="1.600"/></svg>
<div class="abs" id="cid" style="left:74.400px;top:1928.7px;line-height:33px;font-size:17.500px;font-family:'DejaVu Sans Mono','Liberation Mono',monospace;font-weight:bold;color:#fff;white-space:nowrap">ClientID-af943117-df8c-4436-b830-84e46012f009</div><svg style="left:2291px;top:1937px" width="18.5" height="15.5" viewBox="0 0 18.500 15.500" ><rect x=".8" y=".8" width="16.900" height="13.900" fill="none" stroke="#fff" stroke-width="1.500"/><path d="M.8 4.300h16.900" stroke="#fff" stroke-width="1.500"/></svg>
<svg style="left:2337px;top:1930.5px" width="26" height="23" viewBox="0 0 26 23" ><g fill="none" stroke="#fff" stroke-width="1.200"><path d="M11 5V.7h13.500V16.500H17"/><path d="M15 .7v6"/><path d="M17.500 2.500v4M19.300 2.500v4"/><rect x="21" y="2.500" width="2" height="4" stroke-width=".9"/><path d="M18 9.500h5.500M18 11.800h5.500M18 14.100h5.500" stroke-width="1"/><rect x=".7" y="7" width="14.500" height="11" rx="1.500" fill="#007acc"/><path d="M4.500 12.300l2.500 2.500 4.500-4.800" stroke-width="1.500"/><path d="M8 18v3M1.500 21.800h5M9.500 21.800h5" /></g><rect x="6.300" y="19.800" width="3.400" height="3" fill="#fff"/></svg>
<div class="abs" style="left:2378px;top:1927px;line-height:33px;font-size:18.500px;font-family:'DejaVu Sans Mono','Liberation Mono',monospace;font-weight:bold;color:#fff;white-space:nowrap">×</div><div class="abs" style="left:2403.500px;top:1925.5px;line-height:33px;font-size:18.500px;font-family:'DejaVu Sans Mono','Liberation Mono',monospace;font-weight:bold;color:#fff;white-space:nowrap;font-family:'Liberation Sans',sans-serif">0</div><div class="abs" style="left:2337px;top:1955.6px;width:77px;height:1.4px;background:#fff"></div>
<div class="abs" style="left:2440px;top:1927px;line-height:33px;font-size:17.500px;color:#fff;white-space:nowrap">仿真</div><div class="abs" style="left:2492px;top:1928px;line-height:33px;font-size:18.500px;font-family:'DejaVu Sans Mono','Liberation Mono',monospace;font-weight:bold;color:#fff;white-space:nowrap">×</div><div class="abs" style="left:2518px;top:1926.5px;line-height:33px;font-size:18.500px;font-family:'DejaVu Sans Mono','Liberation Mono',monospace;font-weight:bold;color:#fff;white-space:nowrap;font-family:'Liberation Sans',sans-serif">0</div><div class="abs" style="left:2440px;top:1955.6px;width:89px;height:1.4px;background:#fff"></div>

</div>
</body></html>
